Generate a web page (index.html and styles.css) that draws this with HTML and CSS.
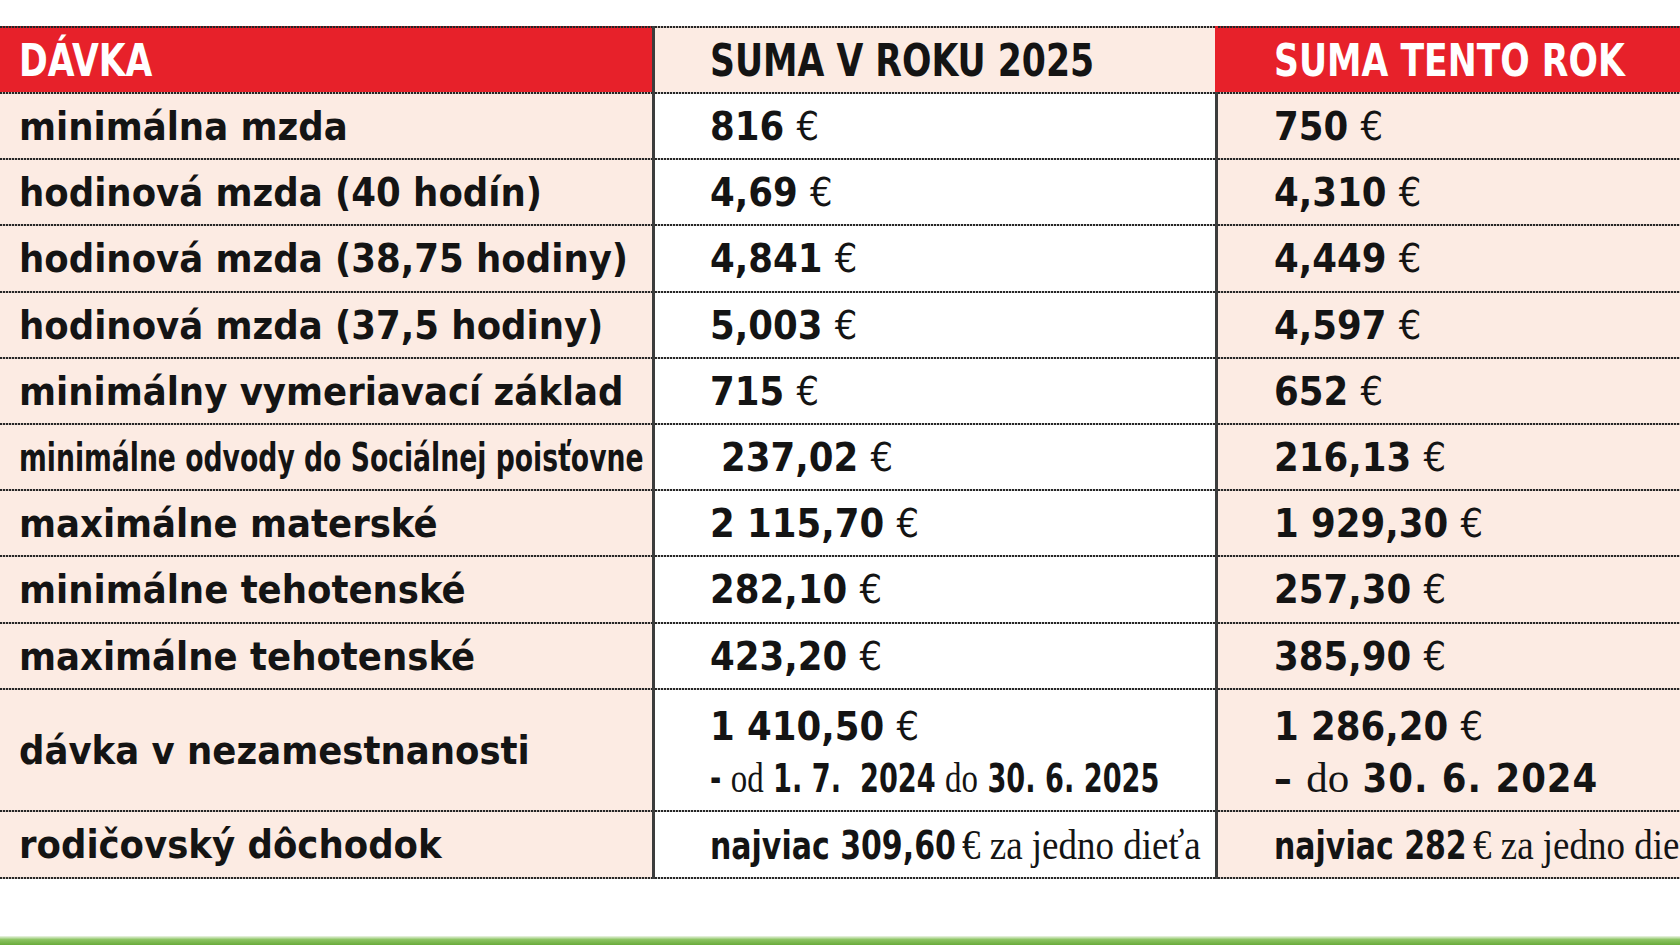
FILE: index.html
```html
<!DOCTYPE html>
<html lang="sk">
<head>
<meta charset="utf-8">
<title>Dávky 2025</title>
<link rel="stylesheet" href="styles.css">
</head>
<body>
<div class="table">
  <div class="row head">
    <div class="cell c1"><span class="hd">DÁVKA</span></div>
    <div class="cell c2"><span class="hd">SUMA V ROKU 2025</span></div>
    <div class="cell c3"><span class="hd">SUMA TENTO ROK</span></div>
  </div>
  <div class="row">
    <div class="cell c1">minimálna mzda</div>
    <div class="cell c2"><span>816 <span class="eur">€</span></span></div>
    <div class="cell c3"><span>750 <span class="eur">€</span></span></div>
  </div>
  <div class="row">
    <div class="cell c1">hodinová mzda (40 hodín)</div>
    <div class="cell c2"><span>4,69 <span class="eur">€</span></span></div>
    <div class="cell c3"><span>4,310 <span class="eur">€</span></span></div>
  </div>
  <div class="row">
    <div class="cell c1">hodinová mzda (38,75 hodiny)</div>
    <div class="cell c2"><span>4,841 <span class="eur">€</span></span></div>
    <div class="cell c3"><span>4,449 <span class="eur">€</span></span></div>
  </div>
  <div class="row">
    <div class="cell c1">hodinová mzda (37,5 hodiny)</div>
    <div class="cell c2"><span>5,003 <span class="eur">€</span></span></div>
    <div class="cell c3"><span>4,597 <span class="eur">€</span></span></div>
  </div>
  <div class="row">
    <div class="cell c1">minimálny vymeriavací základ</div>
    <div class="cell c2"><span>715 <span class="eur">€</span></span></div>
    <div class="cell c3"><span>652 <span class="eur">€</span></span></div>
  </div>
  <div class="row">
    <div class="cell c1"><span class="squeeze">minimálne odvody do Sociálnej poisťovne</span></div>
    <div class="cell c2 indent"><span>237,02 <span class="eur">€</span></span></div>
    <div class="cell c3"><span>216,13 <span class="eur">€</span></span></div>
  </div>
  <div class="row">
    <div class="cell c1">maximálne materské</div>
    <div class="cell c2"><span>2 115,70 <span class="eur">€</span></span></div>
    <div class="cell c3"><span>1 929,30 <span class="eur">€</span></span></div>
  </div>
  <div class="row">
    <div class="cell c1">minimálne tehotenské</div>
    <div class="cell c2"><span>282,10 <span class="eur">€</span></span></div>
    <div class="cell c3"><span>257,30 <span class="eur">€</span></span></div>
  </div>
  <div class="row">
    <div class="cell c1">maximálne tehotenské</div>
    <div class="cell c2"><span>423,20 <span class="eur">€</span></span></div>
    <div class="cell c3"><span>385,90 <span class="eur">€</span></span></div>
  </div>
  <div class="row tall">
    <div class="cell c1">dávka v nezamestnanosti</div>
    <div class="cell c2">
      <div class="stack">
        <span>1 410,50 <span class="eur">€</span></span>
        <span class="period narrow">- <span class="serif">od</span> 1. 7.&nbsp; 2024 <span class="serif">do</span> 30. 6. 2025</span>
      </div>
    </div>
    <div class="cell c3">
      <div class="stack">
        <span>1 286,20 <span class="eur">€</span></span>
        <span class="period wide">– <span class="serif">do</span> 30. 6. 2024</span>
      </div>
    </div>
  </div>
  <div class="row last">
    <div class="cell c1">rodičovský dôchodok</div>
    <div class="cell c2"><span class="limit"><span class="lb m309">najviac 309,60</span><span class="ls">€ za jedno dieťa</span></span></div>
    <div class="cell c3"><span class="limit"><span class="lb m282">najviac 282</span><span class="ls">€ za jedno dieťa</span></span></div>
  </div>
</div>
<div class="spacer"></div>
<div class="greenbar"></div>
</body>
</html>
```

FILE: styles.css
```css
html, body {
  margin: 0;
  height: 100%;
  overflow: hidden;
  background: #ffffff;
}

body {
  display: flex;
  flex-direction: column;
  font-family: "DejaVu Sans Condensed", "DejaVu Sans", sans-serif;
  font-stretch: condensed;
  font-weight: 700;
  font-size: 39.5px;
  color: #141414;
}

.table {
  margin-top: 26px;
  display: flex;
  flex-direction: column;
}

.row {
  display: grid;
  grid-template-columns: 652px 563px 1fr;
  height: 66.2px;
}

.row.head {
  height: 66px;
}

.row.tall {
  height: 122px;
}

.row.last {
  height: 69px;
}

/* dotted rule drawn as a background layer along the top edge of each cell */
.cell {
  --dots: repeating-linear-gradient(90deg, #262626 0 2px, rgba(38, 38, 38, 0.25) 2px 3px);
  display: flex;
  align-items: center;
  white-space: nowrap;
  overflow: hidden;
  box-sizing: border-box;
  padding-top: 2px;
  background: var(--dots) left top / 100% 2px no-repeat, var(--bg);
}

.row.last .cell {
  padding-bottom: 2px;
  background: var(--dots) left top / 100% 2px no-repeat,
              var(--dots) left bottom / 100% 2px no-repeat,
              var(--bg);
}

.c1 {
  --bg: #fcebe3;
  padding-left: 19px;
}

.c2 {
  --bg: #ffffff;
  padding-left: 55px;
  border-left: 3px solid #3c3c3c;
}

.c3 {
  --bg: #fcebe3;
  padding-left: 56px;
  border-left: 3px solid #3c3c3c;
}

.head .c1,
.head .c3 {
  --bg: #e7212a;
  color: #ffffff;
}

.head .c3 {
  border-left-color: #e7212a;
}

.head .c2 {
  --bg: #fcebe3;
}

.hd {
  display: inline-block;
  font-size: 44px;
  transform: scaleX(0.875);
  transform-origin: left center;
}

.eur {
  font-weight: 400;
}

.indent {
  padding-left: 66px;
}

.squeeze {
  display: inline-block;
  transform: scaleX(0.75);
  transform-origin: left center;
}

.stack {
  display: flex;
  flex-direction: column;
  line-height: 51px;
  padding-top: 6px;
}

.period {
  display: inline-block;
  transform-origin: left center;
}

.period.narrow {
  transform: scaleX(0.765);
}

.period.wide {
  letter-spacing: 1px;
}

.serif {
  font-family: "Liberation Serif", "DejaVu Serif", serif;
  font-weight: 400;
  font-stretch: normal;
  font-size: 43px;
  letter-spacing: 0;
}

.limit {
  display: inline-flex;
  align-items: baseline;
}

.lb {
  display: inline-block;
  transform: scaleX(0.844);
  transform-origin: left center;
}

.m309 {
  margin-right: -39px;
}

.m282 {
  margin-right: -29px;
}

.ls {
  display: inline-block;
  font-family: "Liberation Serif", "DejaVu Serif", serif;
  font-weight: 400;
  font-stretch: normal;
  font-size: 43px;
  transform: scaleX(0.86);
  transform-origin: left center;
}

.spacer {
  flex: 1;
}

.greenbar {
  height: 9px;
  background: linear-gradient(#eef6e8, #8cc462 40%, #6aab3b);
}
```
